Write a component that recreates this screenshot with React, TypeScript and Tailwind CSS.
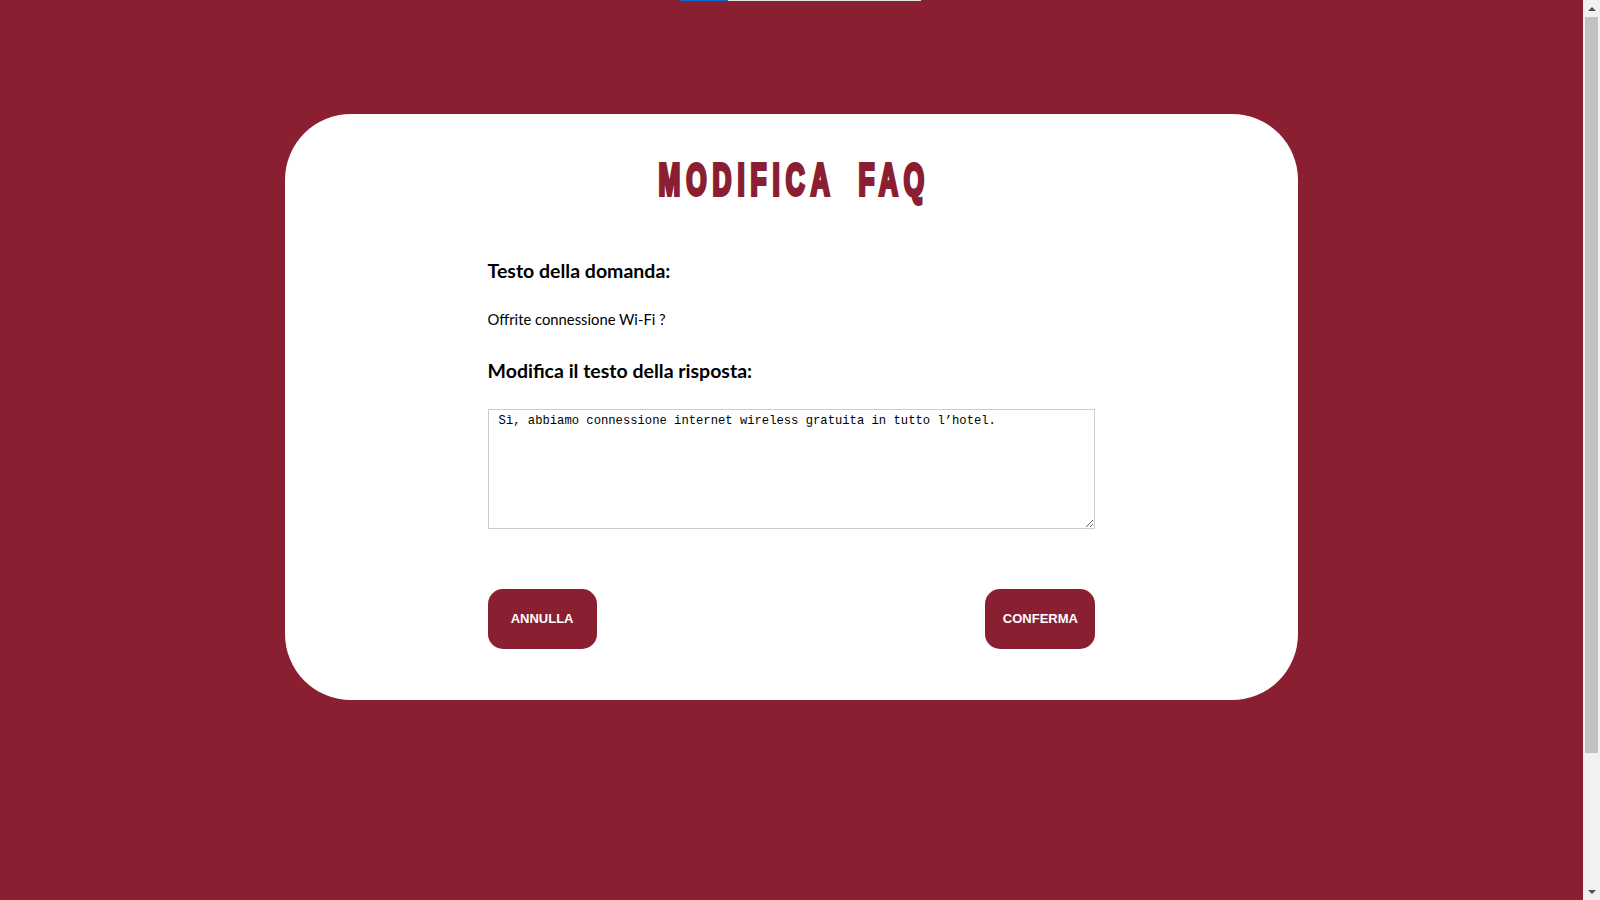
import { useState } from "react";

function Scrollbar() {
  return (
    <div className="flex h-full w-[17px] shrink-0 flex-col bg-[#f1f1f1]">
      <div className="flex h-[17px] items-center justify-center">
        <div className="h-0 w-0 border-x-[4px] border-b-[4px] border-x-transparent border-b-[#505050]" />
      </div>
      <div className="mx-[2px] h-[736px] bg-[#c1c1c1]" />
      <div className="flex-1" />
      <div className="flex h-[17px] items-center justify-center">
        <div className="h-0 w-0 border-x-[4px] border-t-[4px] border-x-transparent border-t-[#505050]" />
      </div>
    </div>
  );
}

export default function App() {
  const [answer, setAnswer] = useState(
    "Sì, abbiamo connessione internet wireless gratuita in tutto l’hotel."
  );

  return (
    <div className="flex h-[900px] w-full overflow-hidden">
      <div className="relative flex-1 bg-[#8a1f32] pt-[114px]">
        {/* progress line at the very top */}
        <div className="absolute top-0 left-[680px] flex h-px">
          <div className="w-[48px] bg-[#0b6bd3]" />
          <div className="w-[193px] bg-[#e2e2e2]" />
        </div>

        <div className="mx-auto w-[64%] rounded-[66px] bg-white pt-[44px] pb-[51px]">
          <h1 className="pl-[6px] text-center leading-none">
            <span className="inline-block origin-center scale-x-[0.595] font-['Liberation_Sans',Arial,sans-serif] text-[44px] font-bold uppercase leading-none tracking-[10px] text-[#8a1f32] [-webkit-text-stroke:4px_#8a1f32] [word-spacing:18px]">
              Modifica FAQ
            </span>
          </h1>

          <div className="mx-auto w-[60%] font-['Lato',sans-serif] text-black">
            <h2 className="mt-[59px] text-[19.5px] font-bold leading-none">
              Testo della domanda:
            </h2>
            <p className="mt-[31px] text-[14.8px] leading-none">
              Offrite connessione Wi-Fi ?
            </p>
            <h2 className="mt-[35px] text-[19.5px] font-bold leading-none">
              Modifica il testo della risposta:
            </h2>

            <textarea
              value={answer}
              onChange={(e) => setAnswer(e.target.value)}
              className="mt-[28px] block h-[120px] w-full border border-[#cccccc] bg-white pt-[4px] pl-[10px] pr-2 font-['Liberation_Mono',monospace] text-[12.2px] leading-[15px] text-black outline-none"
            />

            <div className="mt-[60px] flex justify-between">
              <button
                type="button"
                className="flex h-[60px] w-[109px] items-center justify-center rounded-[15px] bg-[#8a1f32] font-['Liberation_Sans',Arial,sans-serif] text-[13px] font-bold text-white"
              >
                ANNULLA
              </button>
              <button
                type="button"
                className="flex h-[60px] w-[110px] items-center justify-center rounded-[15px] bg-[#8a1f32] font-['Liberation_Sans',Arial,sans-serif] text-[13px] font-bold text-white"
              >
                CONFERMA
              </button>
            </div>
          </div>
        </div>
      </div>
      <Scrollbar />
    </div>
  );
}
